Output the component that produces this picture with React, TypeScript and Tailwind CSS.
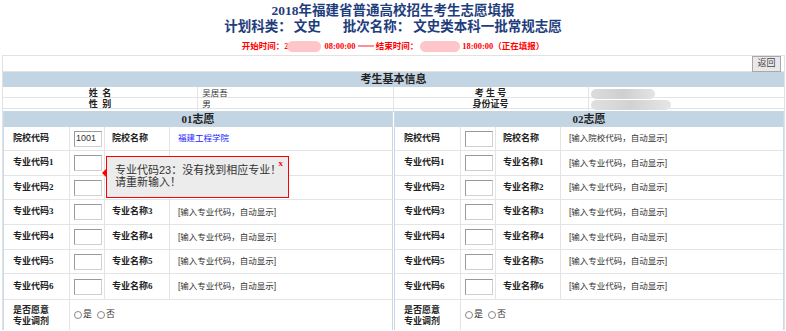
import React from "react";

const SERIF = "font-['Liberation_Serif','Noto_Sans_CJK_SC',serif]";
const SANS = "font-['Liberation_Sans','Noto_Sans_CJK_SC',sans-serif]";

const rows: [string, string][] = [
  ["院校代码", "院校名称"],
  ["专业代码1", "专业名称1"],
  ["专业代码2", "专业名称2"],
  ["专业代码3", "专业名称3"],
  ["专业代码4", "专业名称4"],
  ["专业代码5", "专业名称5"],
  ["专业代码6", "专业名称6"],
];
const heights = ["h-[24px]", "h-[25px]", "h-[24px]", "h-[25px]", "h-[25px]", "h-[24px]", "h-[26px]"];

function Input({ value }: { value?: string }) {
  return (
    <div className="w-[28px] h-[16px] border border-[#9a9a9a] border-r-[#d0d0d0] border-b-[#d0d0d0] bg-white flex items-center pl-[1px] overflow-hidden">
      {value && <span className={`${SANS} text-[9px] text-[#333] leading-none`}>{value}</span>}
    </div>
  );
}

function Panel({ title, first }: { title: string; first: boolean }) {
  return (
    <div className="border-l border-r border-[#c9d9e5] flex flex-col">
      <div className={`h-[16px] bg-[#c3d5e2] flex items-center justify-center ${SERIF} font-bold text-[11px] text-[#222]`}>
        {title}
      </div>
      {rows.map((r, i) => (
        <div key={i} className={`grid grid-cols-[66px_35px_65px_1fr] border-b border-[#e4e4e4] ${heights[i]}`}>
          <div className={`flex items-center pl-[9px] border-r border-[#e4e4e4] ${SERIF} font-bold text-[9px] text-[#222]`}>{r[0]}</div>
          <div className="flex items-center pl-[4px] border-r border-[#e4e4e4]">
            <Input value={i === 0 && first ? "1001" : undefined} />
          </div>
          <div className={`flex items-center pl-[7px] border-r border-[#e4e4e4] ${SERIF} font-bold text-[9px] text-[#222]`}>{r[1]}</div>
          <div className={`flex items-center pl-[8px] ${SANS} text-[8.5px]`}>
            {i === 0 && first ? (
              <span className="text-[#1a1aff]">福建工程学院</span>
            ) : (
              <span className="text-[#333]">{i === 0 ? "[输入院校代码，自动显示]" : "[输入专业代码，自动显示]"}</span>
            )}
          </div>
        </div>
      ))}
      <div className="grid grid-cols-[66px_1fr] h-[30px]">
        <div className={`flex flex-col justify-center pl-[9px] pt-[2px] border-r border-[#e4e4e4] ${SERIF} font-bold text-[9px] leading-[11px] text-[#222]`}>
          <span>是否愿意</span>
          <span>专业调剂</span>
        </div>
        <div className={`flex items-center pl-[4px] gap-[5px] ${SANS} text-[9px] text-[#333]`}>
          <span className="flex items-center gap-[1px]">
            <span className="w-[8px] h-[8px] rounded-full border border-[#888] bg-white" />是
          </span>
          <span className="flex items-center gap-[1px]">
            <span className="w-[8px] h-[8px] rounded-full border border-[#888] bg-white" />否
          </span>
        </div>
      </div>
    </div>
  );
}

export default function App() {
  return (
    <div className="w-[786px] h-[331px] bg-white overflow-hidden relative">
      <div className={`flex flex-col items-center pt-[3px] ${SERIF} font-bold text-[#1e3d7c]`}>
        <div className="text-[13.5px] leading-[16px]">2018年福建省普通高校招生考生志愿填报</div>
        <div className="text-[13.5px] leading-[16px] flex">
          <span>计划科类：</span>
          <span className="ml-[2px]">文史</span>
          <span className="ml-[22px]">批次名称：</span>
          <span className="ml-[3px]">文史类本科一批常规志愿</span>
        </div>
        <div className="mt-[5px] h-[12px] flex items-center text-[#ff0000] text-[8.5px] leading-[12px] whitespace-pre">
          <span>开始时间：2</span>
          <span className="w-[34px] h-[11px] rounded-full bg-[#ffc6ca] blur-[0.5px] -ml-[1px]" />
          <span className="ml-[3px]">08:00:00</span>
          <span className="w-[16px] h-[1.5px] bg-[#ff8f96] mx-[2px]" />
          <span>结束时间：</span>
          <span className="w-[40px] h-[11px] rounded-full bg-[#ffc6ca] blur-[0.5px] ml-[2px]" />
          <span className="ml-[2px]">18:00:00（正在填报）</span>
        </div>
      </div>

      <div className="mt-[3px] ml-[2px] w-[783px] border-t border-l border-r border-[#e2e2e2] flex flex-col">
        <div className="h-[16px] flex justify-end pr-[3px] border-b border-[#e2e2e2]">
          <div className={`w-[29px] h-[16px] bg-[#e9e9e9] border border-[#a8a8a8] flex items-center justify-center ${SANS} text-[9px] text-[#444]`}>
            返回
          </div>
        </div>
        <div className={`h-[15px] bg-[#c3d5e2] flex items-center justify-center ${SERIF} font-bold text-[11px] text-[#222]`}>
          考生基本信息
        </div>
        <div className="grid grid-cols-4 h-[11px] border-b border-[#e4e4e4]">
          <div className={`flex items-center justify-center border-r border-[#e4e4e4] ${SERIF} font-bold text-[9px] text-[#222] whitespace-pre`}>姓  名</div>
          <div className={`flex items-center pl-[4px] border-r border-[#e4e4e4] ${SANS} text-[8.5px] text-[#333]`}>吴居吾</div>
          <div className={`flex items-center justify-center border-r border-[#e4e4e4] ${SERIF} font-bold text-[9px] text-[#222] whitespace-pre`}>考 生 号</div>
          <div className="flex items-center pl-[2px]">
            <span className="w-[64px] h-[10px] rounded-full bg-gradient-to-r from-[#dcdcdc] via-[#cfcfcf] to-[#e4e4e4] blur-[0.5px]" />
          </div>
        </div>
        <div className="grid grid-cols-4 h-[11px] border-b border-[#e4e4e4]">
          <div className={`flex items-center justify-center border-r border-[#e4e4e4] ${SERIF} font-bold text-[9px] text-[#222] whitespace-pre`}>性  别</div>
          <div className={`flex items-center pl-[4px] border-r border-[#e4e4e4] ${SANS} text-[8.5px] text-[#333]`}>男</div>
          <div className={`flex items-center justify-center border-r border-[#e4e4e4] ${SERIF} font-bold text-[9px] text-[#222]`}>身份证号</div>
          <div className="flex items-center pl-[2px]">
            <span className="w-[80px] h-[10px] rounded-full bg-gradient-to-r from-[#e0e0e0] via-[#d2d2d2] to-[#e6e6e6] blur-[0.5px]" />
          </div>
        </div>
        <div className="h-[2px]" />
        <div className="grid grid-cols-[390px_390px] gap-x-[1px]">
          <Panel title="01志愿" first={true} />
          <Panel title="02志愿" first={false} />
        </div>
      </div>

      <div className="absolute left-[106px] top-[156px] w-[183px] h-[42px] bg-[#ececec] border border-[#ff0000] pl-[8px] pt-[7px]">
        <div className="absolute -left-[5px] top-[12px] w-0 h-0 border-y-[4px] border-y-transparent border-r-[4px] border-r-[#ff0000]" />
        <div className={`${SANS} text-[11px] leading-[12px] text-[#333]`}>
          <div>专业代码23：没有找到相应专业！</div>
          <div>请重新输入！</div>
        </div>
        <div className={`absolute right-[5px] top-[1px] ${SERIF} font-bold text-[9px] leading-[10px] text-[#ff0000]`}>x</div>
      </div>
    </div>
  );
}
